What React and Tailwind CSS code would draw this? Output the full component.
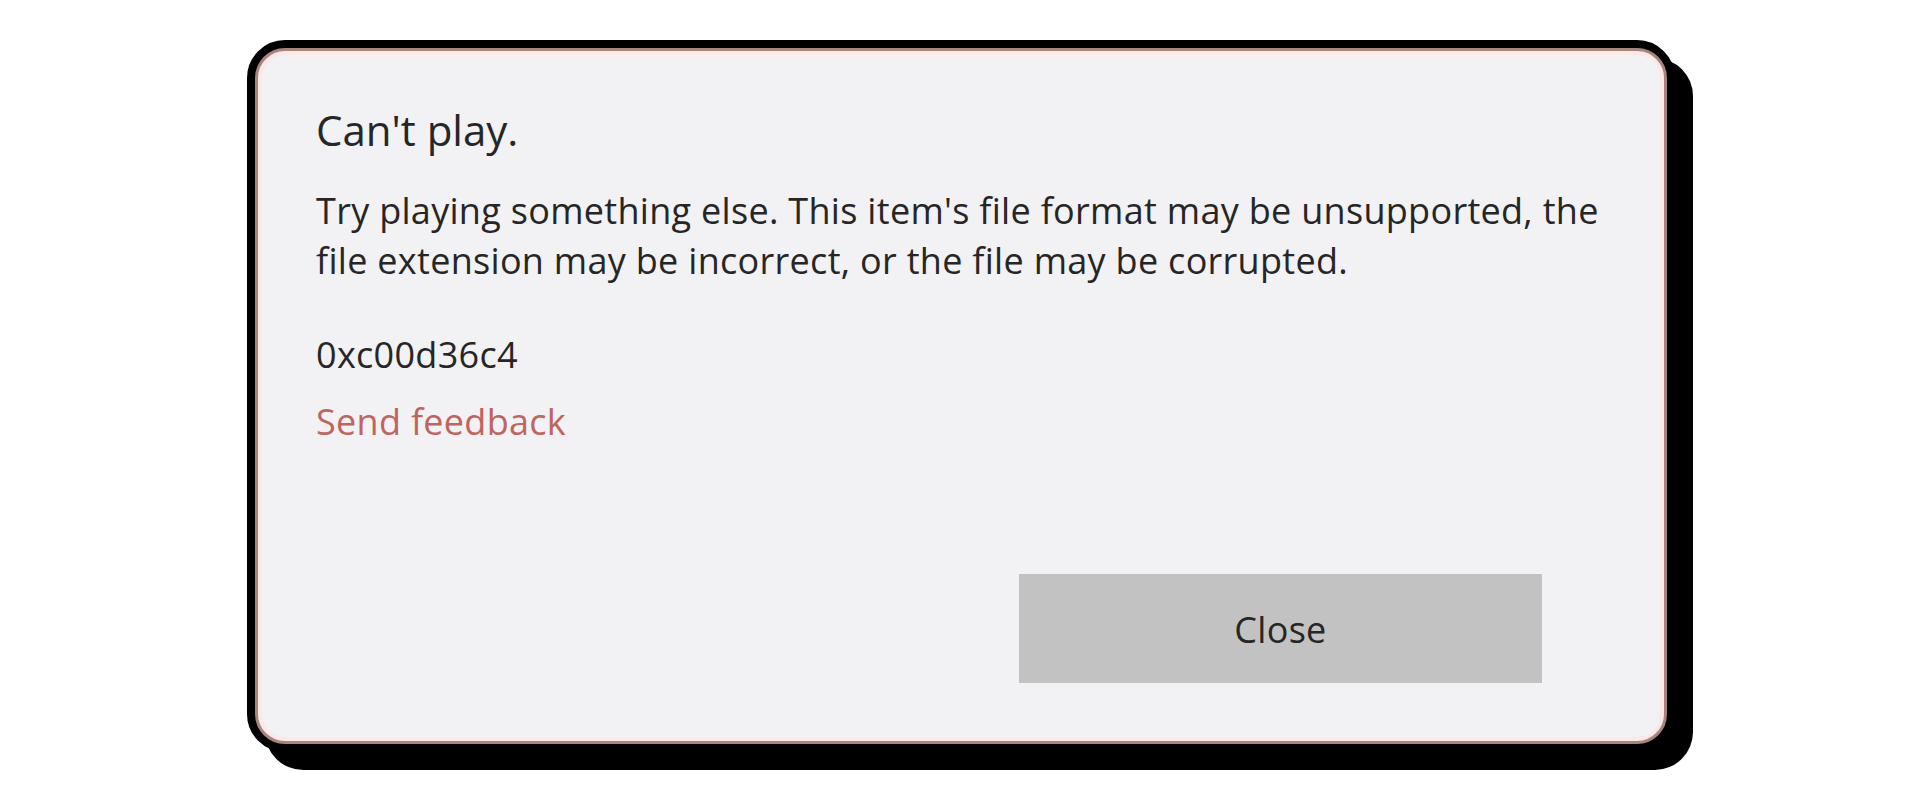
export default function App() {
  return (
    <div className="w-[1920px] h-[807px] bg-white overflow-hidden">
      <div className="pt-[40px] pl-[247px]">
        <div className="w-[1428px] h-[712px] rounded-[38px] border-[8px] border-black bg-black shadow-[18px_18px_0_0_#000]">
          <div
            className="h-full rounded-[30px] border-[3px] border-[#a8847f] bg-[#f2f1f3] shadow-[inset_0_0_0_4px_#fce9e5] flex flex-col pl-[58px] pr-[122px] pt-[55px] pb-[58px] text-[#262626]"
            style={{ fontFamily: '"Open Sans", "Noto Sans", sans-serif' }}
          >
            <div className="text-[42px] leading-[48px]">Can't play.</div>
            <div className="mt-[32px] text-[36px] leading-[50px] tracking-[0.3px] whitespace-nowrap">
              Try playing something else. This item's file format may be unsupported, the
              <br />
              file extension may be incorrect, or the file may be corrupted.
            </div>
            <div className="mt-[44px] text-[36px] leading-[50px] tracking-[0.3px]">0xc00d36c4</div>
            <div className="mt-[17px] text-[36px] leading-[50px] tracking-[0.3px] text-[#c0645e]">Send feedback</div>
            <div className="mt-auto flex justify-end">
              <div className="w-[523px] h-[109px] bg-[#c2c2c2] flex items-center justify-center pt-[3px] text-[36px] leading-[50px] tracking-[0.3px]">
                Close
              </div>
            </div>
          </div>
        </div>
      </div>
    </div>
  );
}
